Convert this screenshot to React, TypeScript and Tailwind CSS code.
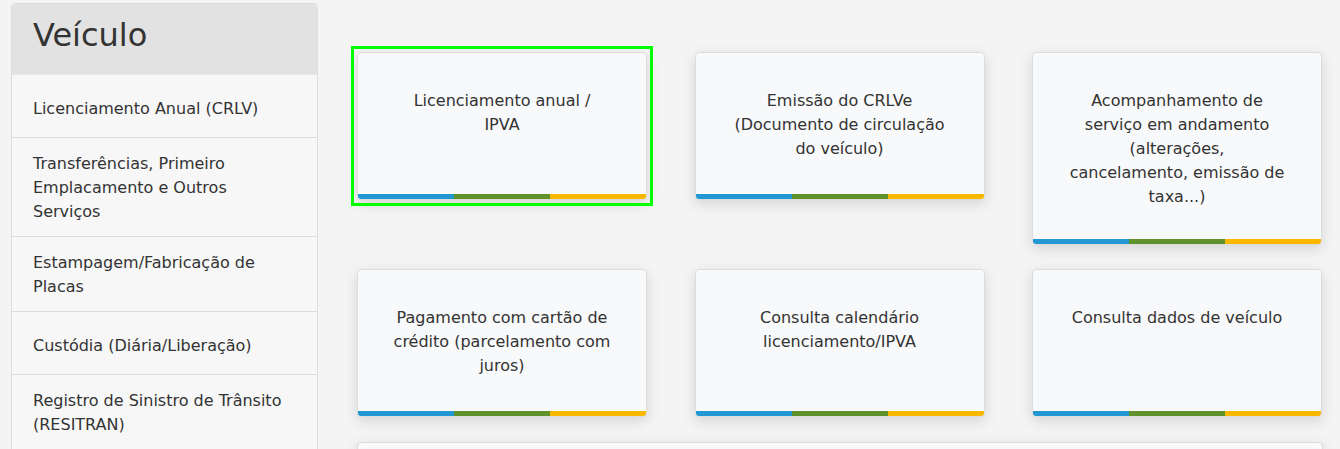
import React from 'react';

const menu = [
  { label: 'Licenciamento Anual (CRLV)', single: true },
  { label: 'Transferências, Primeiro Emplacamento e Outros Serviços', single: false },
  { label: 'Estampagem/Fabricação de Placas', single: false },
  { label: 'Custódia (Diária/Liberação)', single: true },
  { label: 'Registro de Sinistro de Trânsito (RESITRAN)', single: false },
];

const services: string[][] = [
  ['Licenciamento anual /', 'IPVA'],
  ['Emissão do CRLVe', '(Documento de circulação', 'do veículo)'],
  ['Acompanhamento de', 'serviço em andamento', '(alterações,', 'cancelamento, emissão de', 'taxa...)'],
  ['Pagamento com cartão de', 'crédito (parcelamento com', 'juros)'],
  ['Consulta calendário', 'licenciamento/IPVA'],
  ['Consulta dados de veículo'],
];

const ServiceCard: React.FC<{ lines: string[]; focused?: boolean }> = ({ lines, focused }) => (
  <a
    href="#"
    className={`block ${focused ? 'outline-[3px] outline-solid outline-[#00ff00] outline-offset-[3px]' : ''}`}
  >
    <div className="flex flex-col min-h-[148px] rounded-[4px] border border-[#dcdcdc] bg-[#f8f9fa] shadow-[0_4px_14px_rgba(0,0,0,0.13)] overflow-hidden">
      <div className="flex-1 px-[20px] pt-[36px] pb-[30px] text-center text-[16px] leading-6 text-[#333]">
        {lines.map((l, i) => (
          <div key={i}>{l}</div>
        ))}
      </div>
      <div className="flex h-[5px]">
        <div className="flex-1 bg-[#2298d3]" />
        <div className="flex-1 bg-[#5f922a]" />
        <div className="flex-1 bg-[#fbb800]" />
      </div>
    </div>
  </a>
);

const App: React.FC = () => {
  return (
    <div
      className="h-[449px] overflow-hidden bg-[#f4f4f4] flex items-start pl-[11px] pt-[3px]"
      style={{ fontFamily: '"DejaVu Sans", Verdana, sans-serif' }}
    >
      {/* Sidebar */}
      <aside className="w-[307px] shrink-0 rounded-t-[4px] border border-[#dddddd] bg-[#f7f7f7]">
        <div className="h-[71px] flex items-center pl-[21px] pb-[8px] bg-[#e2e2e2] rounded-t-[4px] border-b border-[#e6e6e6] text-[32px] text-[#333]">
          Veículo
        </div>
        {menu.map((item) => (
          <div
            key={item.label}
            className={`px-[21px] border-b border-[#dddddd] text-[16px] leading-6 text-[#333] ${
              item.single ? 'pt-[22px] pb-[16px]' : 'pt-[14px] pb-[12px]'
            }`}
          >
            {item.label}
          </div>
        ))}
      </aside>

      {/* Services */}
      <main className="ml-[39px] pt-[49px] w-[966px]">
        <div className="grid grid-cols-[290px_290px_290px] gap-x-[47.5px] gap-y-[24px] items-start">
          {services.map((s, i) => (
            <ServiceCard key={i} lines={s} focused={i === 0} />
          ))}
        </div>
        <div className="mt-[25px] h-[120px] rounded-[4px] border border-[#dcdcdc] bg-[#f8f9fa] shadow-[0_4px_14px_rgba(0,0,0,0.13)]" />
      </main>
    </div>
  );
};

export default App;
